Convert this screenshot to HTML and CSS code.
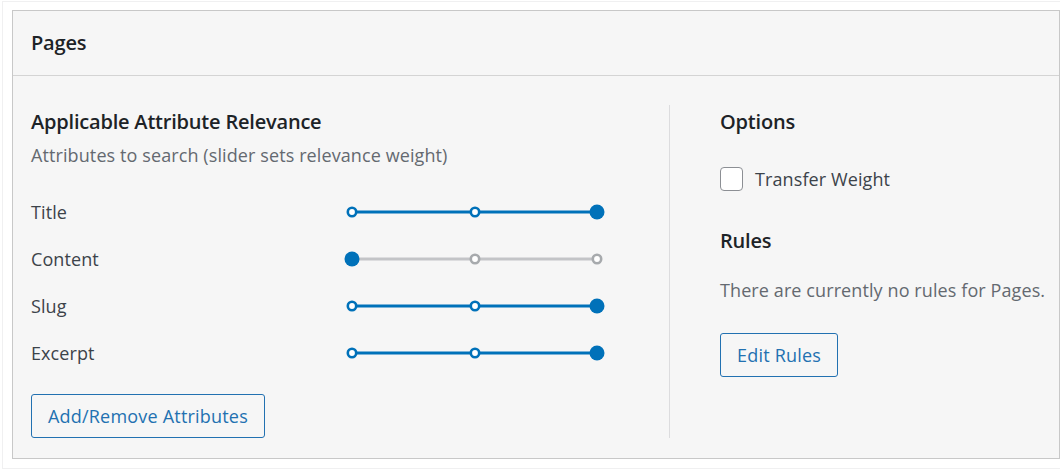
FILE: index.html
```html
<!DOCTYPE html>
<html lang="en">
<head>
<meta charset="utf-8">
<title>Pages</title>
<link rel="stylesheet" href="styles.css">
</head>
<body>
<div class="frame">
  <section class="panel">
    <header class="panel-head">
      <h2 class="panel-title">Pages</h2>
    </header>
    <div class="panel-body">
      <div class="col-left">
        <h3 class="heading">Applicable Attribute Relevance</h3>
        <p class="desc">Attributes to search (slider sets relevance weight)</p>
        <div class="attrs">
          <div class="attr">
            <span class="attr-label">Title</span>
            <svg class="slider" width="262" height="18" viewBox="0 0 262 18">
              <line x1="8" y1="9" x2="253" y2="9" class="track-on"/>
              <circle cx="8" cy="9" r="4.2" class="dot-on"/>
              <circle cx="131" cy="9" r="4.2" class="dot-on"/>
              <circle cx="253" cy="9" r="7.5" class="knob"/>
            </svg>
          </div>
          <div class="attr">
            <span class="attr-label">Content</span>
            <svg class="slider" width="262" height="18" viewBox="0 0 262 18">
              <line x1="8" y1="9" x2="253" y2="9" class="track-off"/>
              <circle cx="131" cy="9" r="4.2" class="dot-off"/>
              <circle cx="253" cy="9" r="4.2" class="dot-off"/>
              <circle cx="8" cy="9" r="7.5" class="knob"/>
            </svg>
          </div>
          <div class="attr">
            <span class="attr-label">Slug</span>
            <svg class="slider" width="262" height="18" viewBox="0 0 262 18">
              <line x1="8" y1="9" x2="253" y2="9" class="track-on"/>
              <circle cx="8" cy="9" r="4.2" class="dot-on"/>
              <circle cx="131" cy="9" r="4.2" class="dot-on"/>
              <circle cx="253" cy="9" r="7.5" class="knob"/>
            </svg>
          </div>
          <div class="attr">
            <span class="attr-label">Excerpt</span>
            <svg class="slider" width="262" height="18" viewBox="0 0 262 18">
              <line x1="8" y1="9" x2="253" y2="9" class="track-on"/>
              <circle cx="8" cy="9" r="4.2" class="dot-on"/>
              <circle cx="131" cy="9" r="4.2" class="dot-on"/>
              <circle cx="253" cy="9" r="7.5" class="knob"/>
            </svg>
          </div>
        </div>
        <button class="btn btn-attrs" type="button">Add/Remove Attributes</button>
      </div>
      <div class="divider"></div>
      <div class="col-right">
        <h3 class="heading">Options</h3>
        <label class="check-row">
          <span class="checkbox"></span>
          <span class="check-label">Transfer Weight</span>
        </label>
        <h3 class="heading rules-heading">Rules</h3>
        <p class="rules-text">There are currently no rules for Pages.</p>
        <button class="btn btn-rules" type="button">Edit Rules</button>
      </div>
    </div>
  </section>
</div>
</body>
</html>
```
FILE: styles.css
```css
* { box-sizing: border-box; }

html, body {
  margin: 0;
  padding: 0;
  background: #ffffff;
}

body {
  font-family: "Open Sans", "Noto Sans", "Liberation Sans", sans-serif;
  font-size: 18px;
  letter-spacing: 0.1px;
  color: #3c434a;
  width: 1060px;
  height: 470px;
  overflow: hidden;
}

.frame {
  margin: 1px 0 0 2px;
  border-top: 1px solid #f0f0f1;
  border-left: 1px solid #f0f0f1;
  border-bottom: 1px solid #f0f0f1;
  padding: 8px 0 9px 9px;
}

.panel {
  width: 1048px;
  height: 449px;
  background: #f6f6f6;
  border: 1px solid #c8c8c8;
  display: flex;
  flex-direction: column;
}

.panel-head {
  height: 66px;
  border-bottom: 1px solid #d4d4d4;
  display: flex;
  align-items: center;
  padding: 0 18px;
}

.panel-title {
  margin: 0;
  font-size: 20px;
  font-weight: 600;
  letter-spacing: -0.2px;
  color: #1d2327;
  line-height: 24px;
}

.panel-body {
  flex: 1;
  display: grid;
  grid-template-columns: 638px 1px 1fr;
  padding: 29px 10px 20px 18px;
}

.divider {
  background: #dcdcde;
}

.heading {
  margin: 5px 0 0 0;
  font-size: 20px;
  font-weight: 600;
  letter-spacing: -0.2px;
  line-height: 24px;
  color: #1d2327;
}

.desc {
  margin: 9px 0 0 0;
  line-height: 24px;
  color: #646970;
}

.attrs {
  margin-top: 21px;
  display: flex;
  flex-direction: column;
}

.attr {
  height: 47px;
  display: grid;
  grid-template-columns: 313px 262px;
  align-items: center;
}

.attr-label {
  line-height: 24px;
  color: #3c434a;
}

.slider { display: block; }

.track-on { stroke: #0071b9; stroke-width: 3; }
.track-off { stroke: #c3c4c7; stroke-width: 3; }
.dot-on { fill: #ffffff; stroke: #0071b9; stroke-width: 2.6; }
.dot-off { fill: #ffffff; stroke: #a7aaad; stroke-width: 2.6; }
.knob { fill: #0071b9; }

.btn {
  font-family: inherit;
  font-size: 18px;
  letter-spacing: 0.2px;
  height: 44px;
  padding: 0 16px;
  border: 1px solid #2271b1;
  border-radius: 3px;
  background: #f6f6f6;
  color: #2271b1;
  line-height: 42px;
  cursor: pointer;
  display: block;
}

.btn-attrs { margin-top: 18px; }

.col-right {
  padding-left: 50px;
}

.check-row {
  margin-top: 33px;
  display: flex;
  align-items: center;
  height: 24px;
}

.checkbox {
  width: 23px;
  height: 24px;
  border: 1px solid #8c8f94;
  border-radius: 4px;
  background: #ffffff;
  flex: none;
}

.check-label {
  margin-left: 12px;
  line-height: 24px;
  color: #3c434a;
}

.rules-heading { margin-top: 38px; }

.rules-text {
  margin: 25px 0 0 0;
  line-height: 24px;
  color: #646970;
  white-space: nowrap;
}

.btn-rules { margin-top: 31px; }
```
